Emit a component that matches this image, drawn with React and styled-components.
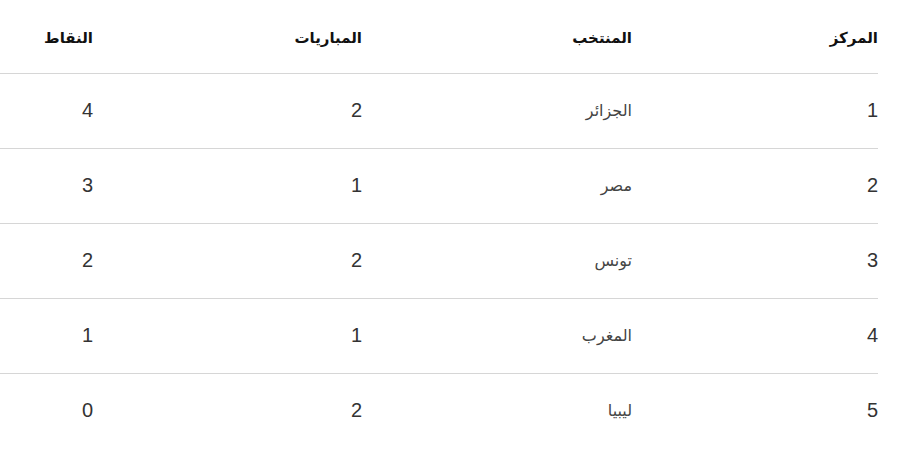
import React from 'react'
import styled, { createGlobalStyle } from 'styled-components'

const GlobalStyle = createGlobalStyle`
  html, body {
    margin:0;
    padding:0;
    background:#fff;
  }
`

const Table = styled.div`
    width:878px;
    direction:rtl;
    font-family:"Liberation Sans", "DejaVu Sans", sans-serif;
`

const Row = styled.div`
    display:grid;
    grid-template-columns:246px 270px 269px 93px;
    align-items:center;
    height:${p => (p.head ? '73px' : '75px')};
    border-top:${p => (p.head ? 'none' : '1px solid #d6d6d6')};
    box-sizing:border-box;
`

const HeadCell = styled.div`
    text-align:right;
    font-size:15px;
    font-weight:700;
    color:#111;
    padding-top:3px;
`

const Cell = styled.div`
    text-align:right;
    font-size:${p => (p.num ? '20px' : '16px')};
    color:${p => (p.num ? '#333' : '#444')};
    padding-bottom:${p => (p.num ? '1px' : '2px')};
`

const headers = ['المركز', 'المنتخب', 'المباريات', 'النقاط']

const rows = [
  [1, 'الجزائر', 2, 4],
  [2, 'مصر', 1, 3],
  [3, 'تونس', 2, 2],
  [4, 'المغرب', 1, 1],
  [5, 'ليبيا', 2, 0],
]

export default () => (
  <>
    <GlobalStyle />
    <Table>
      <Row head>
        {headers.map(h => <HeadCell key={h}>{h}</HeadCell>)}
      </Row>
      {rows.map(r => (
        <Row key={r[0]}>
          <Cell num>{r[0]}</Cell>
          <Cell>{r[1]}</Cell>
          <Cell num>{r[2]}</Cell>
          <Cell num>{r[3]}</Cell>
        </Row>
      ))}
    </Table>
  </>
)
